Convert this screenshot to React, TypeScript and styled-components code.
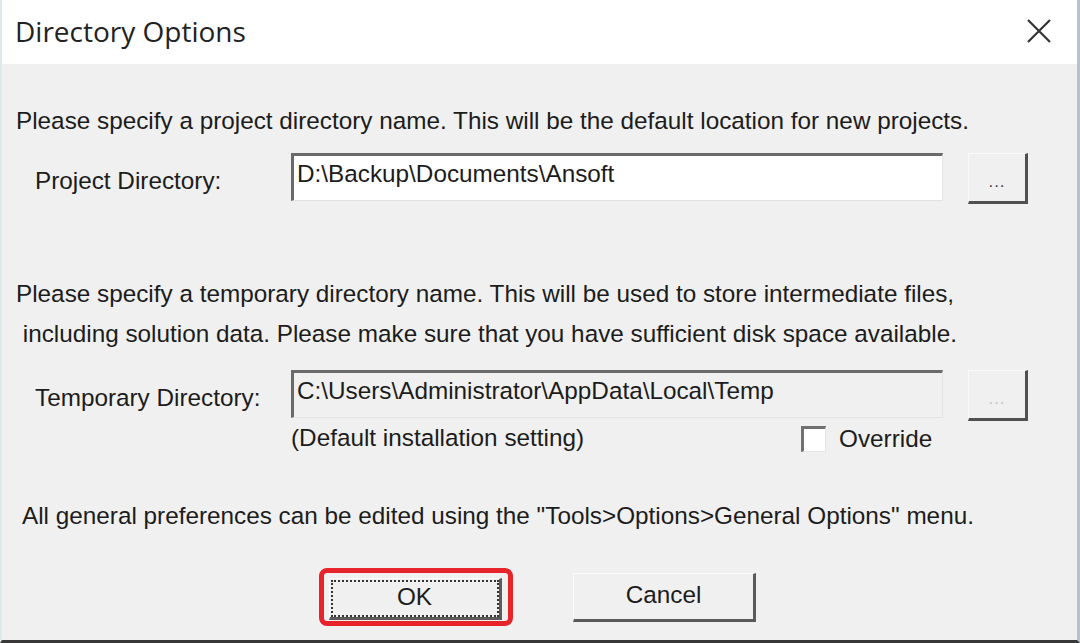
import React from "react";
import styled, { createGlobalStyle } from "styled-components";

const Global = createGlobalStyle`
  html, body { margin: 0; padding: 0; background: #f0f0f0; }
  body { width: 1080px; height: 643px; overflow: hidden; }
`;

const Dialog = styled.div`
  width: 1080px;
  height: 643px;
  display: flex;
  flex-direction: column;
  box-sizing: border-box;
  font-family: "Liberation Sans", Arial, sans-serif;
  color: #1c1c1c;
`;

const TitleBar = styled.div`
  height: 64px;
  background: #ffffff;
  display: flex;
  align-items: center;
  justify-content: space-between;
  padding: 0 25px 0 16px;
  border-left: 2px solid #dfe8ea;
  border-right: 3px solid #b9c2c6;
  box-sizing: border-box;
`;

const Title = styled.div`
  font-family: "Open Sans", "Noto Sans", sans-serif;
  font-size: 28px;
  color: #222;
  margin-top: -2px;
  margin-left: -3px;
`;

const CloseIcon = styled.svg`
  width: 26px;
  height: 26px;
  display: block;
  margin-top: -2px;
`;

const Body = styled.div`
  flex: 1;
  background: #f0f0f0;
  border-left: 2px solid #dfe8ea;
  border-right: 3px solid #b9c2c6;
  border-bottom: 3px solid #383838;
  box-sizing: border-box;
  display: flex;
  flex-direction: column;
  font-size: 24.3px;
`;

const Para = styled.div<{ $top: number; $left: number }>`
  margin-top: ${(p) => p.$top}px;
  padding-left: ${(p) => p.$left}px;
  line-height: 40px;
  white-space: nowrap;
`;

const Row = styled.div<{ $top: number }>`
  margin-top: ${(p) => p.$top}px;
  display: grid;
  grid-template-columns: 289px 652px 25px 60px;
  align-items: start;
`;

const Label = styled.div`
  padding-left: 33px;
  padding-top: 15px;
  line-height: 26px;
`;

const Field = styled.div<{ $disabled?: boolean }>`
  height: 48px;
  box-sizing: border-box;
  background: ${(p) => (p.$disabled ? "#f0f0f0" : "#ffffff")};
  border-top: 3px solid #6a6a6a;
  border-left: 3px solid #6a6a6a;
  border-bottom: 1px solid #e2e2e2;
  border-right: 1px solid #e2e2e2;
  padding: 4px 0 0 3px;
  line-height: 28px;
  white-space: nowrap;
  overflow: hidden;
`;

const BrowseButton = styled.div<{ $disabled?: boolean }>`
  grid-column: 4;
  height: 51px;
  box-sizing: border-box;
  background: #f0f0f0;
  border-top: 1px solid #fafafa;
  border-left: 1px solid #fafafa;
  border-right: 3px solid #505050;
  border-bottom: 3px solid #505050;
  display: flex;
  align-items: flex-end;
  justify-content: center;
  padding-bottom: 12px;
  font-size: 17px;
  line-height: 14px;
  letter-spacing: 1px;
  color: ${(p) => (p.$disabled ? "#c4c4c4" : "#444")};
`;

const SubRow = styled.div`
  margin-top: 4px;
  display: flex;
  align-items: center;
  padding-left: 289px;
  height: 28px;
`;

const SubText = styled.div`
  width: 510px;
  line-height: 26px;
  margin-top: -2px;
`;

const CheckBox = styled.div`
  width: 25px;
  height: 26px;
  box-sizing: border-box;
  background: #ffffff;
  border-top: 3px solid #707070;
  border-left: 3px solid #707070;
  border-bottom: 1px solid #e6e6e6;
  border-right: 1px solid #e6e6e6;
  margin-right: 13px;
`;

const CheckLabel = styled.div`
  line-height: 26px;
`;

const ButtonRow = styled.div`
  margin-top: 32px;
  display: flex;
  align-items: center;
  padding-left: 317px;
  gap: 60px;
`;

const Highlight = styled.div`
  width: 194px;
  height: 58px;
  box-sizing: border-box;
  border: 5px solid #e8242b;
  border-radius: 8px;
  padding: 5px 6px 1px 5px;
  display: flex;
`;

const PushButton = styled.div<{ $w?: number; $h?: number }>`
  width: ${(p) => (p.$w ? `${p.$w}px` : "100%")};
  height: ${(p) => (p.$h ? `${p.$h}px` : "100%")};
  box-sizing: border-box;
  background: #f0f0f0;
  border-top: 1px solid #fbfbfb;
  border-left: 1px solid #fbfbfb;
  border-right: 3px solid #5a5a5a;
  border-bottom: 3px solid #5a5a5a;
  display: flex;
  align-items: center;
  justify-content: center;
  position: relative;
  line-height: 26px;
  padding-bottom: 3px;
`;

const FocusRing = styled.div`
  position: absolute;
  inset: 1px 0 0 1px;
  border: 2px dotted #333;
  pointer-events: none;
`;

export default function App() {
  return (
    <>
      <Global />
      <Dialog>
        <TitleBar>
          <Title>Directory Options</Title>
          <CloseIcon viewBox="0 0 26 26">
            <path d="M2 2 L24 24 M24 2 L2 24" stroke="#333" strokeWidth="2.2" fill="none" />
          </CloseIcon>
        </TitleBar>
        <Body>
          <Para $top={37} $left={14}>
            Please specify a project directory name. This will be the default location for new projects.
          </Para>
          <Row $top={12}>
            <Label>Project Directory:</Label>
            <Field>D:\Backup\Documents\Ansoft</Field>
            <BrowseButton>...</BrowseButton>
          </Row>
          <Para $top={70} $left={14}>
            Please specify a temporary directory name. This will be used to store intermediate files,
            <br />
            &nbsp;including solution data. Please make sure that you have sufficient disk space available.
          </Para>
          <Row $top={16}>
            <Label>Temporary Directory:</Label>
            <Field $disabled>C:\Users\Administrator\AppData\Local\Temp</Field>
            <BrowseButton $disabled>...</BrowseButton>
          </Row>
          <SubRow>
            <SubText>(Default installation setting)</SubText>
            <CheckBox />
            <CheckLabel>Override</CheckLabel>
          </SubRow>
          <Para $top={43} $left={20}>
            All general preferences can be edited using the "Tools&gt;Options&gt;General Options" menu.
          </Para>
          <ButtonRow>
            <Highlight>
              <PushButton>
                <FocusRing />
                OK
              </PushButton>
            </Highlight>
            <PushButton $w={183} $h={49}>Cancel</PushButton>
          </ButtonRow>
        </Body>
      </Dialog>
    </>
  );
}
